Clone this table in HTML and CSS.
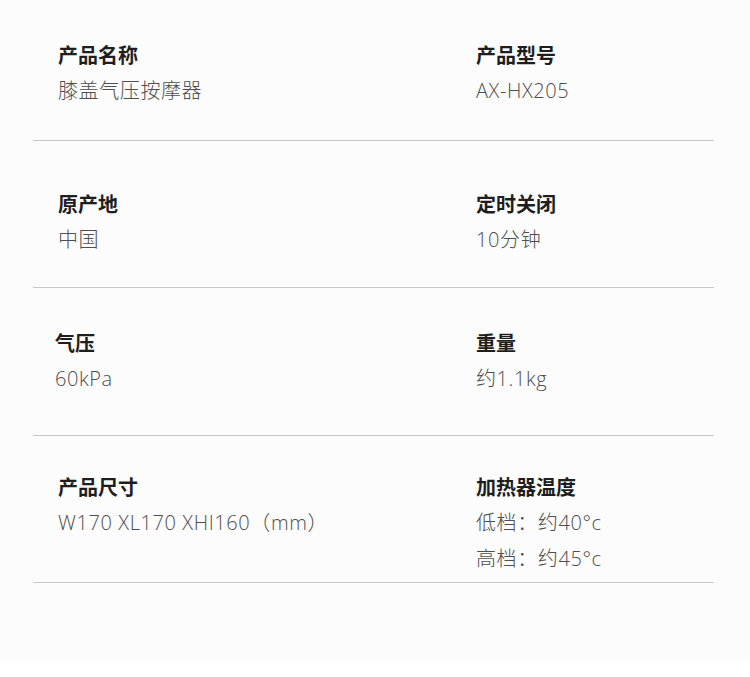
FILE: index.html
```html
<!DOCTYPE html>
<html lang="zh-CN">
<head>
<meta charset="utf-8">
<title>产品参数</title>
<link rel="stylesheet" href="styles.css">
</head>
<body>
<div class="page">
  <div class="specs">
    <div class="row row-1">
      <div class="cell cell-left">
        <div class="label">产品名称</div>
        <div class="value">膝盖气压按摩器</div>
      </div>
      <div class="cell">
        <div class="label">产品型号</div>
        <div class="value">AX-HX205</div>
      </div>
    </div>
    <div class="row row-2">
      <div class="cell cell-left">
        <div class="label">原产地</div>
        <div class="value">中国</div>
      </div>
      <div class="cell">
        <div class="label">定时关闭</div>
        <div class="value">10分钟</div>
      </div>
    </div>
    <div class="row row-3">
      <div class="cell cell-left cell-shift">
        <div class="label">气压</div>
        <div class="value">60kPa</div>
      </div>
      <div class="cell">
        <div class="label">重量</div>
        <div class="value">约1.1kg</div>
      </div>
    </div>
    <div class="row row-4">
      <div class="cell cell-left">
        <div class="label">产品尺寸</div>
        <div class="value">W170 XL170 XHI160（mm）</div>
      </div>
      <div class="cell">
        <div class="label">加热器温度</div>
        <div class="value">低档：约40°c</div>
        <div class="value">高档：约45°c</div>
      </div>
    </div>
  </div>
</div>
</body>
</html>
```

FILE: styles.css
```css
html, body {
  margin: 0;
  padding: 0;
  background: #ffffff;
}

body {
  font-family: "Noto Sans CJK SC", "Noto Sans", "Liberation Sans", sans-serif;
}

.page {
  height: 660px;
  background: #fcfcfc;
  padding: 0 36px 0 33px;
  box-sizing: border-box;
}

.specs {
  display: flex;
  flex-direction: column;
}

.row {
  display: grid;
  grid-template-columns: 443px 1fr;
  border-bottom: 1px solid #c9c9c9;
}

.row-1 { padding: 41px 0 31px; }
.row-2 { padding: 49px 0 29px; }
.row-3 { padding: 41px 0 38px; }
.row-4 { padding: 37px 0 5px; }

.cell {
  display: flex;
  flex-direction: column;
}

.cell-left {
  padding-left: 25px;
}

.cell-shift {
  padding-left: 22px;
}

.label {
  font-size: 20px;
  line-height: 28px;
  font-weight: 700;
  color: #1e1e1e;
  margin-bottom: 4px;
}

.value {
  font-family: "Open Sans", "Noto Sans CJK SC", sans-serif;
  font-size: 20px;
  line-height: 36px;
  font-weight: 300;
  letter-spacing: 0.6px;
  color: #4e4e4e;
  white-space: nowrap;
}
```
